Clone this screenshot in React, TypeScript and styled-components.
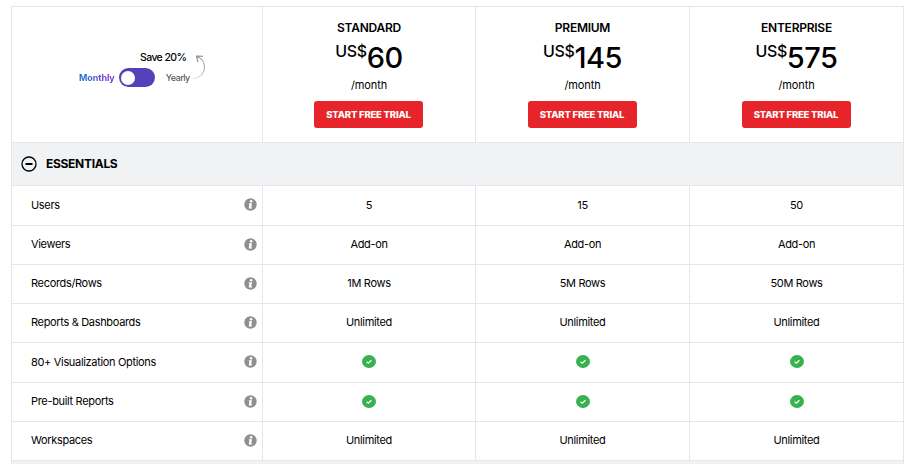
import React from "react";
import styled, { createGlobalStyle } from "styled-components";

const Global = createGlobalStyle`
  html, body { margin: 0; padding: 0; background: #fff; }
  body { font-family: Inter, "Liberation Sans", sans-serif; color: #000; }
`;
const Page = styled.div`
  width: 923px; height: 464px; overflow: hidden; padding: 6px 0 0 11px; box-sizing: border-box;
`;
const Table = styled.div`
  width: 893px; border: 1px solid #e3e7ec; border-width: 1px 0 0 1px; box-sizing: border-box;
`;
const Row = styled.div<{ $tall?: boolean }>`
  display: grid; grid-template-columns: 251px 213px 214px 214px; height: ${(p) => (p.$tall ? 40 : 39)}px; box-sizing: border-box;
  border-bottom: 1px solid #e3e7ec;
`;
const HeaderRow = styled(Row)`
  height: 136px;
`;
const Section = styled.div`
  display: flex; align-items: center; gap: 9px; height: 43px; box-sizing: border-box;
  padding: 0 0 1px 9px; background: #f1f2f4; border-bottom: 1px solid #e3e7ec; border-right: 1px solid #e3e7ec;
  font-size: 12px; font-weight: 700; letter-spacing: -0.3px;
`;
const Footer = styled.div`
  height: 10px; background: #f1f2f4; border-right: 1px solid #e3e7ec;
`;
const Cell = styled.div`
  display: flex; align-items: center; justify-content: center; border-right: 1px solid #e3e7ec;
  font-size: 11px; font-weight: 400; letter-spacing: -0.33px; min-width: 0;
`;
const ValueCell = styled(Cell)`
  padding-bottom: 2px;
`;
const LabelCell = styled(Cell)`
  justify-content: space-between; padding: 0 5.5px 2px 19px;
`;
const ToggleCell = styled(Cell)`
  position: relative; display: block;
`;
const Save = styled.span`
  position: absolute; left: 128px; top: 44px; font-size: 10.5px; font-weight: 500; line-height: 13px; letter-spacing: -0.6px;
`;
const Switcher = styled.div`
  position: absolute; left: 67px; top: 61px; display: flex; align-items: center; gap: 4px;
`;
const Monthly = styled.span`
  font-size: 9px; font-weight: 700; line-height: 13px; letter-spacing: -0.1px;
  background: linear-gradient(90deg, #1a73d0, #8b2fd8); -webkit-background-clip: text; background-clip: text; color: transparent;
`;
const Yearly = styled.span`
  font-size: 9px; font-weight: 500; line-height: 13px; color: #555b61; margin-left: 7px; letter-spacing: -0.5px;
`;
const Track = styled.div`
  width: 36px; height: 19px; border-radius: 10px; background: #5241b8; position: relative;
`;
const Knob = styled.div`
  position: absolute; left: 2px; top: 2.5px; width: 14px; height: 14px; border-radius: 50%; background: #fff;
`;
const Arrow = styled.svg`
  position: absolute; left: 180px; top: 47px;
`;
const Plan = styled(Cell)`
  flex-direction: column; justify-content: flex-start; padding-top: 13px;
`;
const PlanName = styled.div`
  font-size: 12px; font-weight: 600; line-height: 16px; letter-spacing: -0.25px;
`;
const Price = styled.div`
  display: flex; align-items: flex-start; margin-top: 3px; height: 37px; font-size: 29px; font-weight: 500; line-height: 37px; letter-spacing: -0.5px;
`;
const Currency = styled.span`
  font-size: 16px; font-weight: 500; line-height: 22px; margin-top: 1px; letter-spacing: -0.4px;
`;
const Per = styled.div`
  font-size: 11px; line-height: 14px; margin-top: 2px; letter-spacing: -0.1px;
`;
const TrialButton = styled.button`
  width: 109px; height: 27px; margin: 9px 1px 0 0; padding: 0; border: 0; border-radius: 3px; background: #e62429; color: #fff;
  font-family: inherit; font-size: 9.5px; font-weight: 800; letter-spacing: -0.2px;
`;

const InfoIcon = () => (
  <svg width="13" height="13" viewBox="0 0 13 13">
    <circle cx="6.5" cy="6.5" r="6.2" fill="#8f8f8f" />
    <circle cx="7.1" cy="3.3" r="1.3" fill="#fff" />
    <path d="M4.9 5.3h3.1L7.2 9.5h.9v1H4.7l.7-4.2h-.7z" fill="#fff" />
  </svg>
);
const Check = () => (
  <svg width="14" height="13" viewBox="0 0 14 13">
    <ellipse cx="7" cy="6.5" rx="7" ry="6.5" fill="#38b14f" />
    <path d="M4.6 6.7l1.7 1.5 3.1-3" fill="none" stroke="#fff" strokeWidth="1.2" />
  </svg>
);
const Minus = () => (
  <svg width="16" height="16" viewBox="0 0 16 16">
    <circle cx="8" cy="8" r="7" fill="none" stroke="#000" strokeWidth="1.3" />
    <path d="M4.5 8h7" stroke="#000" strokeWidth="2" />
  </svg>
);

const plans = [
  { name: "STANDARD", price: "60" },
  { name: "PREMIUM", price: "145" },
  { name: "ENTERPRISE", price: "575" },
];
const CHECK = "check";
const rows: { cells: [string, string, string, string]; tall?: boolean }[] = [
  { cells: ["Users", "5", "15", "50"], tall: true },
  { cells: ["Viewers", "Add-on", "Add-on", "Add-on"] },
  { cells: ["Records/Rows", "1M Rows", "5M Rows", "50M Rows"] },
  { cells: ["Reports & Dashboards", "Unlimited", "Unlimited", "Unlimited"] },
  { cells: ["80+ Visualization Options", CHECK, CHECK, CHECK], tall: true },
  { cells: ["Pre-built Reports", CHECK, CHECK, CHECK] },
  { cells: ["Workspaces", "Unlimited", "Unlimited", "Unlimited"] },
];

export default function App() {
  return (
    <Page>
      <Global />
      <Table>
        <HeaderRow>
          <ToggleCell>
            <Save>Save 20%</Save>
            <Switcher>
              <Monthly>Monthly</Monthly>
              <Track><Knob /></Track>
              <Yearly>Yearly</Yearly>
            </Switcher>
            <Arrow width="16" height="28" viewBox="0 0 16 28">
              <defs>
                <linearGradient id="arrowFade" x1="0" y1="0" x2="0" y2="1">
                  <stop offset="0" stopColor="#8a8a8a" />
                  <stop offset="1" stopColor="#e4e4e4" />
                </linearGradient>
              </defs>
              <path d="M5 2.500c4.500 1.500 7.500 6 7.500 11 0 6-5 10.500-11.500 11.500" fill="none" stroke="url(#arrowFade)" strokeWidth="1.2" />
              <path d="M11 2.200L4.500 2l1.500 6" fill="none" stroke="#8a8a8a" strokeWidth="1.1" />
            </Arrow>
          </ToggleCell>
          {plans.map((p) => (
            <Plan key={p.name}>
              <PlanName>{p.name}</PlanName>
              <Price><Currency>US$</Currency>{p.price}</Price>
              <Per>/month</Per>
              <TrialButton>START FREE TRIAL</TrialButton>
            </Plan>
          ))}
        </HeaderRow>
        <Section><Minus />ESSENTIALS</Section>
        {rows.map((r) => (
          <Row key={r.cells[0]} $tall={r.tall}>
            <LabelCell>{r.cells[0]}<InfoIcon /></LabelCell>
            {r.cells.slice(1).map((v, i) => (
              <ValueCell key={i}>{v === CHECK ? <Check /> : v}</ValueCell>
            ))}
          </Row>
        ))}
        <Footer />
      </Table>
    </Page>
  );
}
